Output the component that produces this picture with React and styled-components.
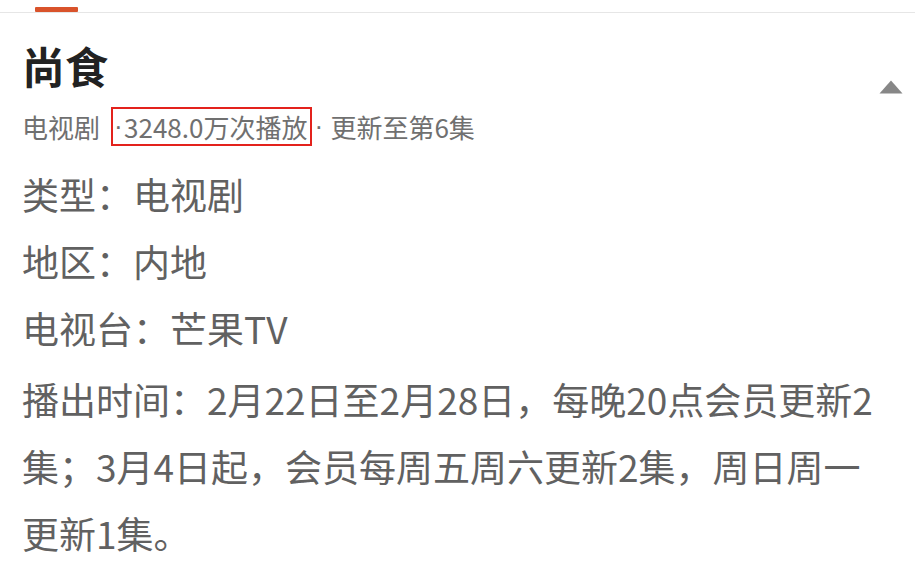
import React from "react";
import styled, { createGlobalStyle } from "styled-components";

const Global = createGlobalStyle`
  html, body { margin: 0; padding: 0; background: #ffffff; }
  body { font-family: "Noto Sans CJK SC", "Noto Sans", sans-serif; }
`;

const Page = styled.div`
  width: 915px;
  height: 564px;
  overflow: hidden;
  background: #fff;
`;

const TabBar = styled.div`
  height: 12px;
  border-bottom: 1px solid #e6e6e6;
  padding-left: 35px;
  box-sizing: content-box;
  display: flex;
  align-items: flex-end;
`;

const TabIndicator = styled.div`
  width: 43px;
  height: 5px;
  background: #d9532b;
  border-radius: 1px;
`;

const Header = styled.div`
  display: flex;
  justify-content: space-between;
  align-items: flex-start;
  padding: 31px 12px 0 22px;
`;

const TitleBlock = styled.div`
  display: flex;
  flex-direction: column;
`;

const Title = styled.h1`
  margin: 0;
  font-size: 43px;
  line-height: 43px;
  font-weight: 700;
  color: #222;
`;

const Meta = styled.div`
  margin-top: 20px;
  display: flex;
  align-items: center;
  font-size: 26px;
  line-height: 35px;
  color: #707070;
  white-space: nowrap;
`;

const Highlight = styled.span`
  display: inline-flex;
  align-items: center;
  margin-left: 11px;
  padding: 0 3px 0 0;
  border: 2px solid #e3221c;
`;

const Dot = styled.span`
  font-family: "Liberation Sans", sans-serif;
  display: inline-block;
  width: ${(p) => p.$w}px;
  padding-left: ${(p) => p.$pl || 0}px;
`;

const Caret = styled.svg`
  margin-top: 36px;
  width: 24px;
  height: 14px;
  display: block;
`;

const Body = styled.div`
  padding: 15px 22px 0 22px;
  color: #616161;
  font-size: 37px;
  line-height: 67px;
`;

const Row = styled.div`
  white-space: nowrap;
`;

const Para = styled.p`
  margin: 4px 0 0;
`;

export default function App() {
  return (
    <Page>
      <Global />
      <TabBar>
        <TabIndicator />
      </TabBar>
      <Header>
        <TitleBlock>
          <Title>尚食</Title>
          <Meta>
            <span>电视剧</span>
            <Highlight>
              <Dot $w={10} $pl={1}>·</Dot>3248.0万次播放
            </Highlight>
            <Dot $w={16} $pl={2}>·</Dot>
            <span>更新至第6集</span>
          </Meta>
        </TitleBlock>
        <Caret viewBox="0 0 24 14" aria-hidden="true">
          <path d="M12 0.5 L23.5 13.5 L0.5 13.5 Z" fill="#878787" />
        </Caret>
      </Header>
      <Body>
        <Row>类型：电视剧</Row>
        <Row>地区：内地</Row>
        <Row>电视台：芒果TV</Row>
        <Para>
          播出时间：2月22日至2月28日，每晚20点会员更新2集；3月4日起，会员每周五周六更新2集，周日周一更新1集。
        </Para>
      </Body>
    </Page>
  );
}
